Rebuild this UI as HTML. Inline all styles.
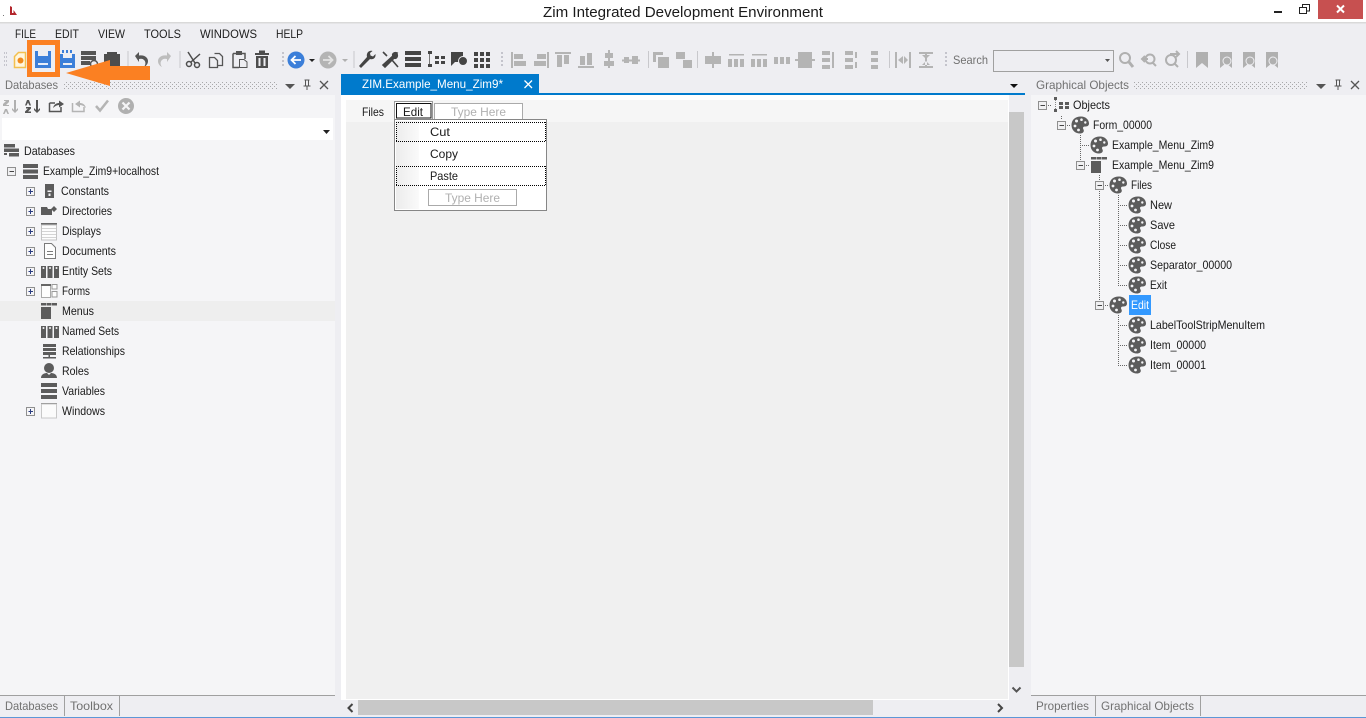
<!DOCTYPE html>
<html><head><meta charset="utf-8"><title>Zim Integrated Development Environment</title>
<style>
html,body{margin:0;padding:0;width:1366px;height:718px;overflow:hidden;background:#eeeef2}
svg{display:block;position:absolute;left:0;top:0}
text{font-family:"Liberation Sans",sans-serif;font-size:12px;fill:#1a1a1a}
.g{fill:#717171}
.h{fill:#b0b0b0}
.m{fill:#1e1e1e}
.d{stroke:#666;stroke-width:1;stroke-dasharray:1 1;fill:none}
</style></head><body>
<svg width="1366" height="718" viewBox="0 0 1366 718" xmlns="http://www.w3.org/2000/svg">
<defs>
<pattern id="dots" width="4" height="4" patternUnits="userSpaceOnUse"><rect width="1" height="1" fill="#a8a8aa"/><rect x="2" y="2" width="1" height="1" fill="#a8a8aa"/></pattern>
<pattern id="vd" width="3" height="4" patternUnits="userSpaceOnUse"><rect width="2" height="2" fill="#c4c4cc"/></pattern>
<g id="pal"><path fill="#5c5c5c" d="M1-8.500C6-8.500 9-5 9-1.500 9 1 7 1.500 5 1.500 3 1.500 2.500 3 3.500 4.500 4.500 6.500 3 8.500 0 8.500-5 8.500-8.500 5-8.500 0-8.500-5-5-8.500 1-8.500Z"/><circle cx="-3.500" cy="-4" r="1.500" fill="#f5f5f7"/><circle cx="1.500" cy="-5.300" r="1.300" fill="#f5f5f7"/><circle cx="5.300" cy="-2.500" r="1.200" fill="#f5f5f7"/><circle cx="-5" cy="1" r="1.400" fill="#f5f5f7"/><circle cx="-1.500" cy="5" r="1.400" fill="#f5f5f7"/></g>
<g id="minus"><rect x="-3.500" y="-3.500" width="8" height="8" fill="#f0f0f2" stroke="#8f8f8f"/><path d="M-1.500 .5H3" stroke="#444"/></g>
<g id="plus"><rect x="-3.500" y="-3.500" width="8" height="8" fill="#f5f5f7" stroke="#8f8f8f"/><path d="M-1.500 .5H3M.5-2V3" stroke="#2a3c80"/></g>
<g id="menuicon"><path fill="#5c5c5c" d="M-8-8h5v2.500h-5zM-2.500-8h5v2.500h-5zM3-8h5v2.500H3zM-8-4H2V8H-8z"/></g>
<g id="x"><path d="M-4-4 4 4M4-4-4 4" stroke="#555" stroke-width="1.300"/></g>
<g id="pin"><path d="M-2.500-5H2.500M-1.500-5V1H1.500V-5M-3.500 1H3.500M0 1V5" stroke="#555" fill="none"/></g>
<g id="al"><path d="M-7-8V8" stroke="#b4b4b4" stroke-width="2"/><rect x="-5" y="-6" width="9" height="5" fill="#b4b4b4"/><rect x="-5" y="1" width="12" height="5" fill="#b4b4b4"/></g>
<g id="bm"><path d="M-6-8H6V8L0 3-6 8Z" fill="#b0b0b0"/></g>
<linearGradient id="mg" x1="0" x2="1" y1="0" y2="0"><stop offset="0" stop-color="#ececec"/><stop offset="1" stop-color="#fafafa"/></linearGradient>
</defs>

<!-- title bar -->
<rect width="1366" height="22" fill="#fff"/>
<rect y="22" width="1366" height="1.500" fill="#d9d9d9"/>
<path d="M10 6V15H17L13.500 10V13H12V7Z" fill="#b3262c"/><rect x="3" y="15" width="1" height="1" fill="#777"/>
<text x="543" y="17" textLength="280" lengthAdjust="spacingAndGlyphs" style="font-size:15px" fill="#222">Zim Integrated Development Environment</text>
<rect x="1274" y="11" width="8" height="2" fill="#222"/>
<path d="M1302.500 7.500V4.500H1309.500V11H1306.500M1299.500 7.500H1306.500V13.500H1299.500Z" fill="none" stroke="#222"/>
<rect x="1318" y="0" width="45" height="19" fill="#c75050"/>
<path d="M1337 5.500 1344 12.500M1344 5.500 1337 12.500" stroke="#fff" stroke-width="2"/>

<!-- menu -->
<text class="m" x="15" y="38" textLength="21" lengthAdjust="spacingAndGlyphs">FILE</text>
<text class="m" x="55" y="38" textLength="24" lengthAdjust="spacingAndGlyphs">EDIT</text>
<text class="m" x="98" y="38" textLength="27" lengthAdjust="spacingAndGlyphs">VIEW</text>
<text class="m" x="144" y="38" textLength="37" lengthAdjust="spacingAndGlyphs">TOOLS</text>
<text class="m" x="200" y="38" textLength="57" lengthAdjust="spacingAndGlyphs">WINDOWS</text>
<text class="m" x="276" y="38" textLength="27" lengthAdjust="spacingAndGlyphs">HELP</text>

<!-- toolbar -->
<rect x="4" y="50" width="3" height="18" fill="url(#vd)"/>
<path d="M14.500 56.500 18.500 52.500H25.500V67.500H14.500Z" fill="#fff6de" stroke="#f3c04e" stroke-width="1.500"/><circle cx="20.500" cy="60.500" r="3" fill="#f08a1d"/>
<path d="M35 51H51V68H35ZM38 51V56H48V51ZM38 63V65H48V63Z" fill="#3c7fd9" fill-rule="evenodd"/><rect x="38" y="63" width="10" height="2" fill="#e8eefa"/>
<path d="M60 54H75V68H60ZM63 54V58H72V54ZM63 63V65H72V63Z" fill="#3c7fd9" fill-rule="evenodd"/><rect x="62" y="50" width="2" height="3" fill="#3c7fd9"/><rect x="66" y="50" width="2" height="3" fill="#3c7fd9"/><rect x="70" y="50" width="2" height="3" fill="#3c7fd9"/>
<g fill="#555"><rect x="81" y="51" width="15" height="4"/><rect x="81" y="56" width="15" height="4"/><rect x="81" y="61" width="9" height="4"/><circle cx="94" cy="64" r="3.500" fill="none" stroke="#555" stroke-width="1.500"/></g>
<path d="M104 54H120V66H104ZM107 52H117V54H107Z" fill="#4d4d4d"/>
<rect x="127.500" y="51" width="1" height="17" fill="#c8c8cc"/>
<path d="M135 56 139 52V55.500C145 54.500 148 58 148 61 148 64 146 66 144 67 145.500 65 146 62.500 144.500 60.500 143 58.500 141 58.500 139 59V62Z" fill="#555"/>
<path d="M171 56 167 52V55.500C161 54.500 158 58 158 61 158 64 160 66 162 67 160.500 65 160 62.500 161.500 60.500 163 58.500 165 58.500 167 59V62Z" fill="#bdbdbd"/>
<rect x="179.500" y="51" width="1" height="17" fill="#c8c8cc"/>
<g stroke="#4d4d4d" stroke-width="1.500" fill="none"><circle cx="189" cy="64" r="2.500"/><circle cx="197" cy="65" r="2.500"/><path d="M191 62 200 54M195 63 188 52"/></g>
<path d="M214.500 53.500H219.500L222.500 56.500V65.500H218M209.500 57.500H214.500L217.500 60.500V67.500H209.500Z" fill="#eeeef2" stroke="#555" stroke-width="1.300"/>
<path d="M233 53.500H245V59M239 67.500H233V53.500" fill="none" stroke="#555" stroke-width="1.500"/><rect x="236" y="51" width="6" height="4" fill="#555"/><path d="M239.500 59.500H244L247 62V67.500H239.500Z" fill="#eeeef2" stroke="#555"/>
<path d="M255 53H269V55H255ZM259 50.500H265V53H259ZM256 56H268V68H256ZM258.500 58V66H260.500V58ZM263.500 58V66H265.500V58Z" fill="#4d4d4d" fill-rule="evenodd"/>
<rect x="281" y="50" width="3" height="18" fill="url(#vd)"/>
<circle cx="296" cy="60" r="8.500" fill="#3c7fd9"/><path d="M301 60H292M295.500 56 291.500 60 295.500 64" stroke="#fff" stroke-width="1.800" fill="none"/>
<path d="M309 59H315L312 62Z" fill="#222"/>
<circle cx="328" cy="60" r="8.500" fill="#b4b4b4"/><path d="M323 60H332M328.500 56 332.500 60 328.500 64" stroke="#e4e4e4" stroke-width="1.800" fill="none"/>
<path d="M342 59H348L345 62Z" fill="#b0b0b0"/>
<rect x="353.500" y="51" width="1" height="17" fill="#c8c8cc"/>
<path d="M359 66 361 68 370 59C373 60 376 58 375.500 54L373 56.500 370.500 55.500 370 53 372.500 51C369 50 366 53 367 57Z" fill="#444"/>
<path d="M383 52 387 56M392 60 398 67M397 53C394 52 392 54 393 56L383 65 385 67 394 58C396 59 398 57 397 54L395 56Z" fill="#444" stroke="#444" stroke-width="1.600"/>
<g fill="#444"><rect x="405" y="51" width="16" height="4"/><rect x="405" y="57" width="16" height="4"/><rect x="405" y="63" width="16" height="4"/></g>
<g fill="#444"><rect x="428" y="51" width="4" height="3"/><rect x="428" y="64" width="4" height="3"/><rect x="435" y="56" width="4" height="3"/><rect x="441" y="56" width="4" height="3"/><rect x="435" y="61" width="4" height="3"/><rect x="441" y="61" width="4" height="3"/></g><path d="M429.500 54V64" stroke="#777"/>
<path d="M451 52H463V62H455L451 66Z" fill="#444"/><circle cx="463" cy="61" r="4.500" fill="#444" stroke="#eeeef2"/>
<g fill="#444"><rect x="474" y="52" width="4" height="4"/><rect x="480" y="52" width="4" height="4"/><rect x="486" y="52" width="4" height="4"/><rect x="474" y="58" width="4" height="4"/><rect x="480" y="58" width="4" height="4"/><rect x="486" y="58" width="4" height="4"/><rect x="474" y="64" width="4" height="4"/><rect x="480" y="64" width="4" height="4"/><rect x="486" y="64" width="4" height="4"/></g>
<rect x="500" y="50" width="3" height="18" fill="url(#vd)"/>
<use href="#al" x="519" y="60"/>
<use href="#al" transform="translate(541 60) scale(-1 1)"/>
<use href="#al" transform="translate(563 60) rotate(90)"/>
<use href="#al" transform="translate(586 60) rotate(-90)"/>
<g fill="#b4b4b4"><rect x="605" y="53" width="8" height="5"/><rect x="604" y="61" width="10" height="5"/><rect x="608" y="50" width="2" height="18"/>
<rect x="624" y="57" width="5" height="6"/><rect x="632" y="56" width="6" height="8"/><rect x="622" y="59.500" width="18" height="2"/>
<path d="M653 52H663V55H656V62H653ZM658 57H669V68H658Z"/><path d="M676 52H685V59H676ZM683 60H692V68H683Z"/>
<rect x="705" y="56" width="16" height="8"/><rect x="712" y="52" width="2" height="16"/>
<rect x="728" y="59" width="4" height="8"/><rect x="734" y="59" width="4" height="8"/><rect x="740" y="59" width="4" height="8"/><rect x="729" y="54" width="15" height="1.500"/>
<rect x="751" y="59" width="4" height="8"/><rect x="757" y="59" width="4" height="8"/><rect x="763" y="59" width="4" height="8"/><rect x="752" y="54" width="15" height="1.500"/>
<rect x="774" y="57" width="4" height="7"/><rect x="780" y="57" width="4" height="7"/><rect x="786" y="57" width="4" height="7"/>
<rect x="798" y="52" width="14" height="16"/><rect x="795" y="59" width="20" height="2"/>
<rect x="822" y="51" width="8" height="4"/><rect x="822" y="58" width="8" height="4"/><rect x="822" y="65" width="8" height="4"/><rect x="832" y="52" width="2" height="16"/>
<rect x="845" y="51" width="8" height="4"/><rect x="845" y="58" width="8" height="4"/><rect x="845" y="65" width="8" height="4"/><rect x="855" y="52" width="2" height="6"/><rect x="855" y="62" width="2" height="6"/>
<rect x="871" y="51" width="7" height="4"/><rect x="871" y="58" width="7" height="4"/><rect x="871" y="65" width="7" height="4"/>
<path d="M895 52H897V68H895ZM909 52H911V68H909ZM898 60 903 56V64ZM908 60 904 56V64Z"/>
<path d="M919 52H933V54H919ZM919 66H933V68H919ZM925 54H927V66H925ZM922 55H930L926 59ZM922 65H930L926 61Z"/></g>
<rect x="648" y="51" width="1" height="17" fill="#c8c8cc"/><rect x="697" y="51" width="1" height="17" fill="#c8c8cc"/><rect x="889" y="51" width="1" height="17" fill="#c8c8cc"/>
<rect x="945" y="50" width="3" height="18" fill="url(#vd)"/>
<text class="g" x="953" y="64" textLength="35" lengthAdjust="spacingAndGlyphs">Search</text>
<rect x="993.500" y="50.500" width="120" height="21" fill="#eeeef2" stroke="#a0a0a0"/>
<path d="M1105 59H1110L1107.500 62Z" fill="#555"/>
<g fill="none" stroke="#b0b0b0" stroke-width="2"><circle cx="1125" cy="58" r="5"/><path d="M1129 62 1133 67" stroke-width="3"/>
<circle cx="1150" cy="59" r="4.500"/><path d="M1153 63 1156 66M1148 59H1142M1145 56 1142 59 1145 62"/>
<circle cx="1171" cy="60" r="5"/><path d="M1175 64 1178 67M1170 54H1179M1176 51 1179 54 1176 57"/></g>
<rect x="1187" y="51" width="1" height="17" fill="#c8c8cc"/>
<use href="#bm" x="1202" y="60"/><use href="#bm" x="1226" y="60"/><use href="#bm" x="1249" y="60"/><use href="#bm" x="1272" y="60"/>
<circle cx="1227" cy="61" r="4" fill="#b0b0b0" stroke="#eeeef2"/><circle cx="1250" cy="61" r="4" fill="#b0b0b0" stroke="#eeeef2"/><circle cx="1273" cy="61" r="4" fill="#b0b0b0" stroke="#eeeef2"/>

<!-- left panel -->
<text class="g" x="5" y="89" textLength="53" lengthAdjust="spacingAndGlyphs">Databases</text>
<rect x="63" y="82" width="214" height="7" fill="url(#dots)"/>
<path d="M285 84H295L290 89Z" fill="#555"/><use href="#pin" x="307" y="85"/><use href="#x" x="324" y="85"/>
<rect x="0" y="95" width="335" height="600" fill="#f5f5f7"/>
<g fill="#b0b0b0"><path d="M4 100H9V102L6 105H9V106H3V104L6 101H4ZM5 109H7L9 114H7.500L6 111 4.500 114H3ZM14 100H16V110L18 108V110L15 113 12 110V108L14 110Z"/></g>
<g fill="#555"><path d="M27 100H29L31 105.500H29.500L28 102.500 26.500 105.500H25ZM26 107H31V108.500L28 111.500H31V113H25V111.500L28 108.500H26ZM36 100H38V110L40 108V110L37 113 34 110V108L36 110Z"/></g>
<path d="M49.500 103V111.500H61V107M49.500 103H55" fill="none" stroke="#555" stroke-width="1.500"/><path d="M53 108C54 104 57 103 59 103V100.500L64 104 59 107.500V105C57 105 55 106 53 108Z" fill="#555"/>
<path d="M72.500 103V111.500H84V107" fill="none" stroke="#b4b4b4" stroke-width="1.500"/><path d="M86 108C85 104 82 103 80 103V100.500L75 104 80 107.500V105C82 105 84 106 86 108Z" fill="#b4b4b4"/>
<path d="M96 106 100 110.500 108 100.500" fill="none" stroke="#b4b4b4" stroke-width="2.500"/>
<circle cx="126" cy="106" r="8" fill="#b0b0b0"/><path d="M122.500 102.500 129.500 109.500M129.500 102.500 122.500 109.500" stroke="#f5f5f7" stroke-width="2.200"/>
<rect x="2" y="118" width="331" height="22" fill="#fff"/>
<path d="M323 129H330L326.500 133Z" fill="#222" transform="translate(0 1)"/>

<rect x="0" y="301" width="335" height="20" fill="#eeeeee"/>

<!-- left tree icons -->
<g fill="#5c5c5c">
<rect x="4" y="144" width="11" height="3.500"/><rect x="4" y="148.500" width="15" height="3.500"/><rect x="9" y="153" width="10" height="3.500"/><rect x="4" y="153" width="3" height="2"/>
<rect x="23" y="164" width="15" height="4"/><rect x="23" y="169.500" width="15" height="4"/><rect x="23" y="175" width="15" height="4"/>
<path d="M45 184H54V198H45ZM47.500 190.500V192H51.500V190.500ZM48.500 193.500V196H50.500V193.500Z" fill-rule="evenodd"/>
<path d="M41 207H47L48 209H52V215H41ZM54 206 57 209 54 212 51 209Z"/>
<path d="M41 266H46V278H41ZM47.500 266H52.500V278H47.500ZM54 266H59V278H54Z"/>
<path d="M41 326H46V338H41ZM47.500 326H52.500V338H47.500ZM54 326H59V338H54Z"/>
</g>
<g fill="#f5f5f7"><circle cx="43.500" cy="268" r="1"/><circle cx="50" cy="268" r="1"/><circle cx="56.500" cy="268" r="1"/><circle cx="43.500" cy="328" r="1"/><circle cx="50" cy="328" r="1"/><circle cx="56.500" cy="328" r="1"/></g>
<rect x="41" y="223" width="16" height="2" fill="#6a6a6a"/><rect x="41.500" y="225" width="15" height="15" fill="#fdfdfd" stroke="#c4c4c4"/><path d="M42 228.500H56M42 231.500H56M42 234.500H56M42 237.500H56" stroke="#d4d4d4"/>
<path d="M44.500 243.500H51.500L55.500 247.500V258.500H44.500ZM47 251.500H53M47 254.500H53" fill="#fdfdfd" stroke="#7a7a7a"/>
<rect x="41.500" y="285.500" width="9" height="12" fill="#fdfdfd" stroke="#aaa"/><rect x="41" y="284" width="10" height="2" fill="#666"/><path d="M52 284.500H57V289H52ZM52 291.500H57V297H52Z" fill="#fdfdfd" stroke="#999"/>
<use href="#menuicon" x="49" y="311"/>
<g fill="#5c5c5c"><rect x="43" y="344" width="13" height="3"/><rect x="43" y="348" width="13" height="3"/><rect x="43" y="352" width="13" height="3"/><rect x="43" y="357" width="13" height="1.500"/><rect x="48.500" y="355" width="1.500" height="2"/>
<circle cx="49" cy="368" r="5"/><path d="M41 378C41 374 45 373 47 373L49 375 51 373C53 373 57 374 57 378Z"/>
<rect x="41" y="383" width="16" height="4"/><rect x="41" y="389" width="16" height="4"/><rect x="41" y="395" width="16" height="4"/></g>
<rect x="41" y="403" width="16" height="2" fill="#777"/><rect x="41.500" y="404" width="15" height="14" fill="#fbfbfb" stroke="#c8c8c8"/>

<use href="#minus" x="11" y="171"/>
<use href="#plus" x="30" y="191"/><use href="#plus" x="30" y="211"/><use href="#plus" x="30" y="231"/><use href="#plus" x="30" y="251"/><use href="#plus" x="30" y="271"/><use href="#plus" x="30" y="291"/><use href="#plus" x="30" y="411"/>

<text x="24" y="155" textLength="51" lengthAdjust="spacingAndGlyphs">Databases</text>
<text x="43" y="175" textLength="116" lengthAdjust="spacingAndGlyphs">Example_Zim9+localhost</text>
<text x="61" y="195" textLength="48" lengthAdjust="spacingAndGlyphs">Constants</text>
<text x="62" y="215" textLength="50" lengthAdjust="spacingAndGlyphs">Directories</text>
<text x="62" y="235" textLength="39" lengthAdjust="spacingAndGlyphs">Displays</text>
<text x="62" y="255" textLength="54" lengthAdjust="spacingAndGlyphs">Documents</text>
<text x="62" y="275" textLength="50" lengthAdjust="spacingAndGlyphs">Entity Sets</text>
<text x="62" y="295" textLength="28" lengthAdjust="spacingAndGlyphs">Forms</text>
<text x="62" y="315" textLength="32" lengthAdjust="spacingAndGlyphs">Menus</text>
<text x="62" y="335" textLength="57" lengthAdjust="spacingAndGlyphs">Named Sets</text>
<text x="62" y="355" textLength="63" lengthAdjust="spacingAndGlyphs">Relationships</text>
<text x="62" y="375" textLength="27" lengthAdjust="spacingAndGlyphs">Roles</text>
<text x="62" y="395" textLength="43" lengthAdjust="spacingAndGlyphs">Variables</text>
<text x="62" y="415" textLength="43" lengthAdjust="spacingAndGlyphs">Windows</text>

<!-- bottom tabs left -->
<rect x="0" y="695" width="335" height="1" fill="#a0a0a0"/>
<rect x="64" y="696" width="1" height="20" fill="#a0a0a0"/><rect x="119" y="696" width="1" height="20" fill="#a0a0a0"/>
<text class="g" x="5" y="710" textLength="53" lengthAdjust="spacingAndGlyphs">Databases</text>
<text class="g" x="70" y="710" textLength="43" lengthAdjust="spacingAndGlyphs">Toolbox</text>

<!-- center doc -->
<rect x="341" y="74" width="198" height="19" fill="#007acc"/>
<text x="362" y="88" textLength="141" lengthAdjust="spacingAndGlyphs" style="fill:#fff">ZIM.Example_Menu_Zim9*</text>
<path d="M524.500 80.500 532 88M532 80.500 524.500 88" stroke="#fff" stroke-width="1.300"/>
<path d="M1010 84H1018L1014 88Z" fill="#111"/>
<rect x="341" y="93" width="684" height="2" fill="#007acc"/>
<rect x="341" y="95" width="668" height="605" fill="#fff"/>
<rect x="346" y="100" width="662" height="599" fill="#f0f0f0"/>
<rect x="346" y="100" width="662" height="22" fill="#f6f6f6"/>
<rect x="1009" y="112" width="15" height="555" fill="#c8c8c8"/>
<path d="M1012.500 687.500 1016.500 691.500 1020.500 687.500" fill="none" stroke="#555" stroke-width="2"/>
<rect x="358" y="700" width="515" height="15" fill="#c8c8c8"/>
<path d="M352.500 704 348.500 708 352.500 712" fill="none" stroke="#444" stroke-width="2"/>
<path d="M998 704 1002 708 998 712" fill="none" stroke="#444" stroke-width="2"/>

<text x="362" y="116" textLength="22" lengthAdjust="spacingAndGlyphs">Files</text>
<rect x="394.500" y="101.500" width="38" height="18" fill="#fff" stroke="#999"/>
<rect x="396.500" y="103.500" width="34.500" height="14.500" fill="#fff" stroke="#111"/>
<text x="403" y="116" textLength="20" lengthAdjust="spacingAndGlyphs">Edit</text>
<rect x="434.500" y="103.500" width="88" height="16" fill="#fff" stroke="#aaa"/>
<text class="h" x="451" y="116" textLength="55" lengthAdjust="spacingAndGlyphs">Type Here</text>
<rect x="394.500" y="119.500" width="152" height="91" fill="#fff" stroke="#868686"/>
<rect x="396" y="121" width="23" height="88" fill="url(#mg)"/>
<path d="M396 122.500H546M396 141.500H546M396.500 122V142M545.500 122V142M396 166.500H546M396 185.500H546M396.500 166V186M545.500 166V186" fill="none" stroke="#000" stroke-dasharray="1 1"/>
<text x="430" y="136" textLength="20" lengthAdjust="spacingAndGlyphs">Cut</text>
<text x="430" y="158" textLength="28" lengthAdjust="spacingAndGlyphs">Copy</text>
<text x="430" y="180" textLength="28" lengthAdjust="spacingAndGlyphs">Paste</text>
<rect x="428.500" y="189.500" width="88" height="16" fill="#fff" stroke="#aaa"/>
<text class="h" x="445" y="202" textLength="55" lengthAdjust="spacingAndGlyphs">Type Here</text>

<!-- right panel -->
<text class="g" x="1036" y="89" textLength="93" lengthAdjust="spacingAndGlyphs">Graphical Objects</text>
<rect x="1134" y="82" width="173" height="7" fill="url(#dots)"/>
<path d="M1316 84H1326L1321 89Z" fill="#555"/><use href="#pin" x="1338" y="85"/><use href="#x" x="1355" y="85"/>
<rect x="1031" y="95" width="335" height="600" fill="#f5f5f7"/>

<path class="d" d="M1046 105.500H1052M1061.500 116V120M1065 125.500H1071M1080.500 135V160M1080 145.500H1090M1084 165.500H1090M1099.500 175V300M1103 185.500H1109M1118.500 195V286M1118 205.500H1128M1118 225.500H1128M1118 245.500H1128M1118 265.500H1128M1118 285.500H1128M1103 305.500H1109M1118.500 315V366M1118 325.500H1128M1118 345.500H1128M1118 365.500H1128"/>
<use href="#minus" x="1042" y="105"/><use href="#minus" x="1061" y="125"/><use href="#minus" x="1080" y="165"/><use href="#minus" x="1099" y="185"/><use href="#minus" x="1099" y="305"/>
<g fill="#5c5c5c"><rect x="1054" y="97" width="3" height="3"/><rect x="1054" y="109" width="3" height="3"/><rect x="1059" y="102" width="4" height="3"/><rect x="1065" y="102" width="4" height="3"/><rect x="1059" y="106" width="4" height="3"/><rect x="1065" y="106" width="4" height="3"/></g><path d="M1055.500 100V109" stroke="#888" stroke-dasharray="1 1"/>
<use href="#pal" x="1080" y="125"/><use href="#pal" x="1099" y="145"/><use href="#menuicon" x="1099" y="165"/><use href="#pal" x="1118" y="185"/>
<use href="#pal" x="1137" y="205"/><use href="#pal" x="1137" y="225"/><use href="#pal" x="1137" y="245"/><use href="#pal" x="1137" y="265"/><use href="#pal" x="1137" y="285"/>
<use href="#pal" x="1118" y="305"/><use href="#pal" x="1137" y="325"/><use href="#pal" x="1137" y="345"/><use href="#pal" x="1137" y="365"/>

<text x="1073" y="109" textLength="37" lengthAdjust="spacingAndGlyphs">Objects</text>
<text x="1093" y="129" textLength="59" lengthAdjust="spacingAndGlyphs">Form_00000</text>
<text x="1112" y="149" textLength="102" lengthAdjust="spacingAndGlyphs">Example_Menu_Zim9</text>
<text x="1112" y="169" textLength="102" lengthAdjust="spacingAndGlyphs">Example_Menu_Zim9</text>
<text x="1131" y="189" textLength="21" lengthAdjust="spacingAndGlyphs">Files</text>
<text x="1150" y="209" textLength="22" lengthAdjust="spacingAndGlyphs">New</text>
<text x="1150" y="229" textLength="25" lengthAdjust="spacingAndGlyphs">Save</text>
<text x="1150" y="249" textLength="26" lengthAdjust="spacingAndGlyphs">Close</text>
<text x="1150" y="269" textLength="82" lengthAdjust="spacingAndGlyphs">Separator_00000</text>
<text x="1150" y="289" textLength="17" lengthAdjust="spacingAndGlyphs">Exit</text>
<rect x="1129" y="295" width="22" height="20" fill="#3399ff"/>
<text x="1131" y="309" textLength="18" lengthAdjust="spacingAndGlyphs" style="fill:#fff">Edit</text>
<text x="1150" y="329" textLength="115" lengthAdjust="spacingAndGlyphs">LabelToolStripMenuItem</text>
<text x="1150" y="349" textLength="56" lengthAdjust="spacingAndGlyphs">Item_00000</text>
<text x="1150" y="369" textLength="56" lengthAdjust="spacingAndGlyphs">Item_00001</text>

<rect x="1031" y="695" width="335" height="1" fill="#a0a0a0"/>
<rect x="1095" y="696" width="1" height="20" fill="#a0a0a0"/><rect x="1200" y="696" width="1" height="20" fill="#a0a0a0"/>
<text class="g" x="1036" y="710" textLength="53" lengthAdjust="spacingAndGlyphs">Properties</text>
<text class="g" x="1101" y="710" textLength="93" lengthAdjust="spacingAndGlyphs">Graphical Objects</text>

<rect x="0" y="717" width="1366" height="1" fill="#5c97d6"/>

<!-- annotations -->
<rect x="29.500" y="42.500" width="28" height="32" fill="none" stroke="#fb8022" stroke-width="5"/>
<path d="M66 73 110 60V66H150V80H110V86Z" fill="#fb8022"/>
</svg>
</body></html>
